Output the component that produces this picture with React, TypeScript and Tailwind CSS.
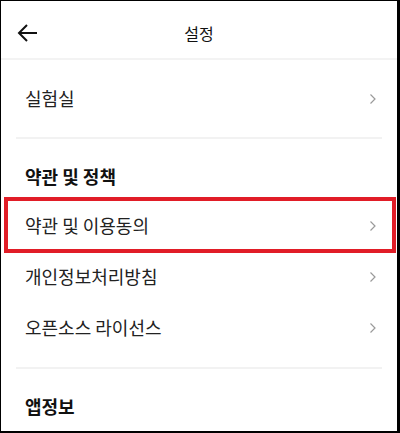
const FONT = { fontFamily: '"Noto Sans CJK KR", "Noto Sans", sans-serif' };

function Chevron() {
  return (
    <svg width="8" height="12" viewBox="0 0 8 12" className="mr-[20px]">
      <path d="M1.5 1.5 L6 6 L1.5 10.5" fill="none" stroke="#9a9a9a" strokeWidth="1.2" />
    </svg>
  );
}

function Row({ label, marked }: { label: string; marked?: boolean }) {
  return (
    <div className="relative h-[51px] flex items-center justify-between pl-[24px]">
      <span className="text-[18px] text-[#222]">{label}</span>
      <Chevron />
      {marked && (
        <div className="absolute left-[3px] right-[1px] top-[-3px] bottom-[-2px] border-[4px] border-[#e11d27]" />
      )}
    </div>
  );
}

export default function App() {
  return (
    <div
      className="w-[400px] h-[433px] bg-white border-l border-t border-r-[3px] border-b-2 border-black overflow-hidden"
      style={FONT}
    >
      <header className="relative h-[59px] flex items-center justify-center border-b-2 border-[#f3f3f3]">
        <svg width="22" height="20" viewBox="0 0 22 20" className="absolute left-[16px] top-[22px]">
          <path d="M2 10 H20 M10 2 L2 10 L10 18" fill="none" stroke="#111" strokeWidth="2" />
        </svg>
        <span className="text-[16px] text-[#111] mt-[6px]">설정</span>
      </header>

      <div className="h-[77px] flex items-center justify-between pl-[24px]">
        <span className="text-[18px] text-[#222]">실험실</span>
        <Chevron />
      </div>
      <div className="mx-[15px] h-[2px] bg-[#f2f2f2]" />

      <div className="pl-[24px] pt-[25px] h-[61px]">
        <span className="text-[18px] font-bold text-[#111] leading-[24px]">약관 및 정책</span>
      </div>
      <Row label="약관 및 이용동의" marked />
      <Row label="개인정보처리방침" />
      <Row label="오픈소스 라이선스" />
      <div className="mt-[14px] mx-[15px] h-[2px] bg-[#f2f2f2]" />

      <div className="pl-[24px] pt-[25px]">
        <span className="text-[18px] font-bold text-[#111] leading-[24px]">앱정보</span>
      </div>
    </div>
  );
}
